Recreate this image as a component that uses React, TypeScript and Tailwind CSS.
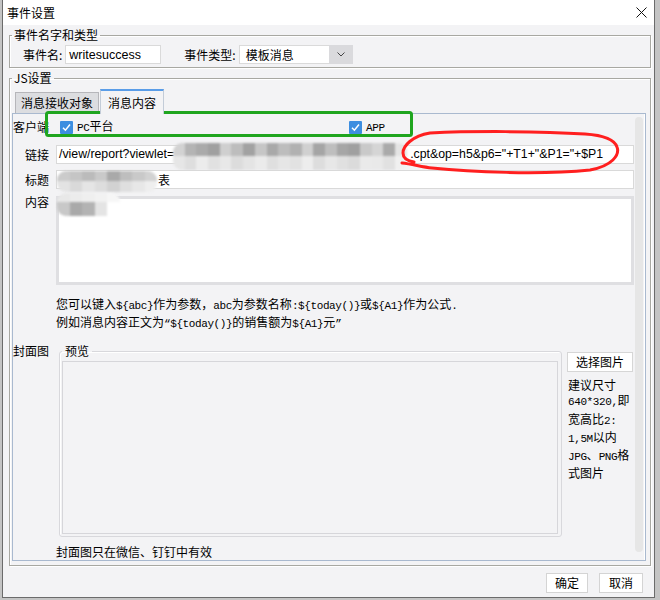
import React from 'react';

// ascii runs are drawn in a mono face so they keep the half-width look of the dialog font
const asciiRun = /([\x20-\x7e“”]+)/;

const Mixed = ({ text }: { text: string }) => (
  <>
    {text.split(asciiRun).map((part, i) =>
      i % 2 === 1 ? (
        <span key={i} className="font-['Liberation_Mono',monospace] text-[11px] tracking-[-0.4px]">
          {part}
        </span>
      ) : (
        <React.Fragment key={i}>{part}</React.Fragment>
      )
    )}
  </>
);

interface PixelRow {
  h: number;
  colors: string[];
}

const Pixels = ({ rows, cell, className }: { rows: PixelRow[]; cell: number; className: string }) => (
  <div className={`absolute flex flex-col overflow-hidden rounded-[9px] blur-[0.8px] ${className}`}>
    {rows.map((row, r) => (
      <div key={r} className="flex shrink-0">
        {row.colors.map((c, i) => (
          <div key={i} className="shrink-0" style={{ width: cell, height: row.h, background: c }} />
        ))}
      </div>
    ))}
  </div>
);

const Check = () => (
  <span className="w-[13px] h-[13px] rounded-[1px] bg-[#3d8ee0] flex items-center justify-center shrink-0">
    <svg width="11" height="11" viewBox="0 0 11 11">
      <path d="M2 5.8L4.4 8.2L9 2.6" fill="none" stroke="#fff" strokeWidth="1.5" />
    </svg>
  </span>
);

const linkBlur: PixelRow[] = [
  {
    h: 13,
    colors: [
      '#d2d2d2', '#b4b4b4', '#aaaaaa', '#a0a0a0', '#cfcfcf', '#bdbdbd', '#a2a2a2', '#c6c6c6', '#a9a9a9', '#bdbdbd',
      '#b1b1b1', '#d0d0d0', '#a5a5a5', '#bebebe', '#a6a6a6', '#a0a0a0', '#c9c9c9', '#d5d5d5', '#aaaaaa', '#e4e4e4',
    ],
  },
  {
    h: 14,
    colors: [
      '#e6e6e6', '#dedede', '#ececec', '#e1e1e1', '#e8e8e8', '#dcdcdc', '#e4e4e4', '#ebebeb', '#dfdfdf', '#e6e6e6',
      '#e2e2e2', '#ededed', '#dddddd', '#e7e7e7', '#e0e0e0', '#dbdbdb', '#eaeaea', '#e9e9e9', '#e1e1e1', '#f0f0f0',
    ],
  },
];

const titleBlur: PixelRow[] = [
  { h: 10, colors: ['#cbcbcb', '#c5c5c5', '#bbbbbb', '#c9c9c9', '#a9a9a9', '#bebebe', '#c9c9c9', '#d2d2d2'] },
  { h: 11, colors: ['#e3e3e3', '#d9d9d9', '#e5e5e5', '#dddddd', '#d2d2d2', '#dfdfdf', '#e7e7e7', '#eeeeee'] },
];

const contentBlur: PixelRow[] = [
  { h: 9, colors: ['#e8e8e8', '#ececec', '#efefef', '#f2f2f2', '#f6f6f6'] },
  { h: 14, colors: ['#c8c8c8', '#a9a9a9', '#b3b3b3', '#e4e4e4', '#ffffff'] },
];

const sideNotes = ['建议尺寸', '640*320,即', '宽高比2:', '1,5M以内', 'JPG、PNG格', '式图片'];

export default function App() {
  return (
    <div className="relative w-[660px] h-[600px] overflow-hidden bg-[#c4c4c4] font-['Noto_Sans_CJK_SC',sans-serif] text-[12px] leading-[16px] text-black">
      <div className="ml-[2px] w-[653px] h-[598px] flex flex-col border-x border-b border-[#6b6b6b] bg-[#f3f3f5]">
        {/* title bar */}
        <div className="h-[25px] shrink-0 bg-white flex items-center justify-between pl-[4px] pr-[7px]">
          <span>事件设置</span>
          <svg width="11" height="11" viewBox="0 0 11 11">
            <path d="M0.5 0.5L10.5 10.5M10.5 0.5L0.5 10.5" stroke="#111" strokeWidth="1" />
          </svg>
        </div>

        {/* name and type */}
        <fieldset className="mt-[2px] ml-[6px] mr-[3px] pl-[2px] pb-[3px] border border-[#a8a8a2] shadow-[inset_1px_1px_0_#fff,1px_1px_0_#fff]">
          <legend className="px-[2px]">事件名字和类型</legend>
          <div className="mt-[2px] ml-[11px] h-[19px] flex items-center">
            <span>事件名:</span>
            <div className="ml-[3px] w-[96px] h-[19px] bg-white border border-[#dadada] pl-[3px] flex items-center font-['Liberation_Sans',sans-serif] text-[12.5px]">
              writesuccess
            </div>
            <span className="ml-[23px]">事件类型:</span>
            <div className="ml-[3px] w-[114px] h-[19px] flex">
              <div className="flex-1 bg-white border border-r-0 border-[#dadada] pl-[6px] flex items-center">模板消息</div>
              <div className="w-[24px] bg-[#dadadd] flex items-center justify-center">
                <svg width="8" height="5" viewBox="0 0 8 5">
                  <path d="M0.5 0.5L4 4L7.5 0.5" fill="none" stroke="#444" strokeWidth="1" />
                </svg>
              </div>
            </div>
          </div>
        </fieldset>

        {/* js settings */}
        <fieldset className="mt-[2px] ml-[6px] mr-[3px] pl-[2px] pr-[4px] pb-[4px] border border-[#a8a8a2] shadow-[inset_1px_1px_0_#fff,1px_1px_0_#fff]">
          <legend className="px-[2px]">JS设置</legend>
          <div className="mt-[3px] h-[24px] flex items-end pl-[3px]">
            <div className="h-[21px] w-[84px] flex items-center justify-center bg-[#dcdde0] border border-b-0 border-[#b6b6ba]">
              消息接收对象
            </div>
            <div className="relative z-10 -mb-px ml-px h-[25px] w-[64px] flex items-center justify-center bg-[#f3f3f5] border-x border-[#c3ccd8] border-t-2 border-t-[#5a9de8]">
              消息内容
            </div>
          </div>

          <div className="h-[448px] flex border border-[#a9b9cf] bg-[#f3f3f5]">
            <div className="flex-1 overflow-hidden">
              {/* client */}
              <div className="mt-[4px] h-[18px] flex items-center">
                <span className="w-[36px] shrink-0 text-right">客户端</span>
                <div className="ml-[11px] w-[289px] flex items-center">
                  <Check />
                  <span className="ml-[4px]">
                    <Mixed text="PC平台" />
                  </span>
                </div>
                <div className="flex items-center">
                  <Check />
                  <span className="ml-[4px]">
                    <Mixed text="APP" />
                  </span>
                </div>
              </div>

              {/* link */}
              <div className="mt-[9px] flex items-center">
                <span className="w-[36px] shrink-0 text-right">链接</span>
                <div className="relative ml-[7px] flex-1 h-[19px] bg-white border border-[#d9d9d9] pl-[2px] leading-[17px] whitespace-nowrap font-['Liberation_Sans',sans-serif] text-[12.3px]">
                  /view/report?viewlet=
                  <span className="inline-block w-[236px]" />
                  {'.cpt&op=h5&p6="+T1+"&P1="+$P1'}
                  <Pixels rows={linkBlur} cell={11.7} className="left-[116px] -top-[3px]" />
                </div>
              </div>

              {/* title */}
              <div className="mt-[6px] flex items-center">
                <span className="w-[36px] shrink-0 text-right">标题</span>
                <div className="relative ml-[7px] flex-1 h-[19px] bg-white border border-[#d9d9d9] pl-px leading-[17px] whitespace-nowrap">
                  <span className="inline-block w-[100px]" />表
                  <Pixels rows={titleBlur} cell={12.5} className="left-0 top-0" />
                </div>
              </div>

              {/* content */}
              <div className="mt-[7px] flex items-start">
                <span className="-mt-[2px] w-[36px] shrink-0 text-right">内容</span>
                <div className="relative ml-[7px] flex-1 h-[89px] bg-white border-[3px] border-[#dfdfe2]">
                  <Pixels rows={contentBlur} cell={12.6} className="-left-[2px] -top-[6px]" />
                </div>
              </div>

              <div className="mt-[11px] ml-[43px] whitespace-nowrap">
                <div>
                  <Mixed text="您可以键入${abc}作为参数，abc为参数名称:${today()}或${A1}作为公式." />
                </div>
                <div>
                  <Mixed text="例如消息内容正文为“${today()}的销售额为${A1}元”" />
                </div>
              </div>

              {/* cover */}
              <div className="mt-[11px] flex items-start">
                <span className="w-[36px] shrink-0 text-right">封面图</span>
                <fieldset className="ml-[10px] w-[503px] pl-[2px] pr-[3px] pb-[2px] border border-[#d8d8dc] rounded-[3px] shadow-[inset_1px_1px_0_#fff]">
                  <legend className="px-[3px]">预览</legend>
                  <div className="mt-[2px] h-[173px] border border-[#d6d6da]" />
                </fieldset>
                <div className="ml-[5px] w-[67px]">
                  <div className="mt-[9px] w-[66px] h-[20px] bg-white border border-[#d6d6d6] flex items-center justify-center">
                    选择图片
                  </div>
                  <div className="mt-[5px] pl-px leading-[15.3px] whitespace-nowrap">
                    {sideNotes.map((line) => (
                      <div key={line}>
                        <Mixed text={line} />
                      </div>
                    ))}
                  </div>
                </div>
              </div>

              <div className="mt-[7px] ml-[43px] whitespace-nowrap">封面图只在微信、钉钉中有效</div>
            </div>

            {/* scrollbar */}
            <div className="w-[11px] pt-[3px] pb-[8px] pl-px pr-[2px] shadow-[inset_-1px_0_0_#fff]">
              <div className="h-full rounded-[4px] bg-[#e6e6e6]" />
            </div>
          </div>
        </fieldset>

        <div className="mt-[7px] flex justify-end gap-[11px] pr-[11px]">
          <div className="w-[42px] h-[20px] bg-white border border-[#d4d4d4] flex items-center justify-center">确定</div>
          <div className="w-[44px] h-[20px] bg-white border border-[#d4d4d4] flex items-center justify-center">取消</div>
        </div>
      </div>

      {/* hand-drawn annotations over the dialog */}
      <svg className="absolute inset-0 pointer-events-none" width="660" height="600" viewBox="0 0 660 600">
        <rect x="46.5" y="112.5" width="365" height="23" rx="2" fill="none" stroke="#1fa51f" strokeWidth="3" />
        <path
          d="M402 163C412 164 422 167 432 168C470 172 540 175 590 170C612 166 620 155 617 147C614 138 600 135 585 134C540 131 470 131 430 133C412 136 403 146 403 153C403 158 408 161 414 162"
          fill="none"
          stroke="#ff1f1f"
          strokeWidth="3"
          strokeLinecap="round"
        />
      </svg>
    </div>
  );
}
